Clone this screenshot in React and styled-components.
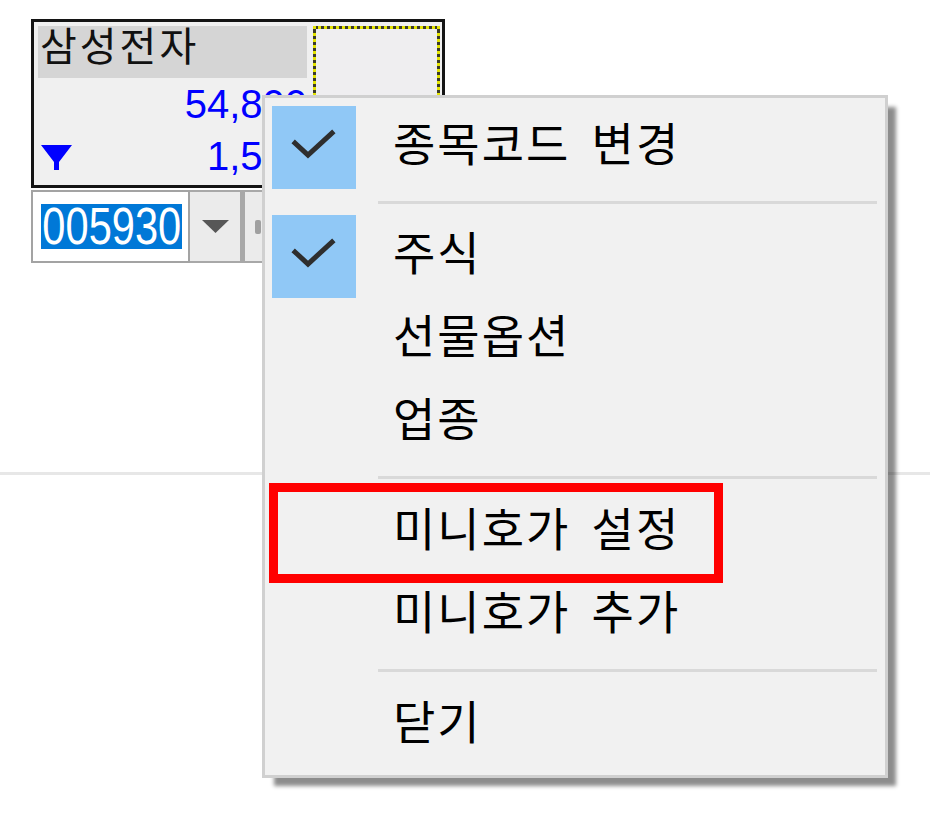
import React from "react";
import styled, { createGlobalStyle } from "styled-components";

const GlobalStyle = createGlobalStyle`
  html, body { margin: 0; padding: 0; background: #ffffff; }
  body {
    width: 930px;
    height: 825px;
    overflow: hidden;
    font-family: "Noto Sans CJK KR", "Noto Sans", sans-serif;
  }
`;

const Page = styled.div`
  position: relative;
  width: 930px;
  height: 825px;
  box-sizing: border-box;
  padding-top: 19px;
`;

const Header = styled.div`
  padding-left: 31px;
`;

const Ticker = styled.div`
  display: flex;
  flex-direction: column;
  gap: 2px;
  width: 414px;
`;

const QuoteBox = styled.div`
  box-sizing: border-box;
  height: 169px;
  border: 3px solid #141414;
  background: #f0f0f0;
  padding: 4px 2px 4px 4px;
  display: grid;
  grid-template-columns: 269px 127px;
  column-gap: 6px;
`;

const QuoteCol = styled.div`
  display: flex;
  flex-direction: column;
`;

const NameRow = styled.div`
  height: 52px;
  background: #d5d5d5;
  padding-left: 2px;
  font-family: "Noto Sans CJK KR", sans-serif;
  font-size: 40px;
  letter-spacing: 3px;
  line-height: 36px;
  color: #111;
`;

const ValueRow = styled.div`
  height: ${(p) => p.$h}px;
  display: flex;
  align-items: flex-start;
  justify-content: space-between;
  font-family: "Liberation Sans", Arial, sans-serif;
  font-size: 40px;
  line-height: 52px;
  color: #0000ff;
`;

const Arrow = styled.svg`
  margin: 15px 0 0 3px;
  flex: none;
`;

const Value = styled.span`
  margin-left: auto;
`;

const FocusBox = styled.div`
  box-sizing: border-box;
  height: 155px;
  border: 3px dotted #e4e400;
  background: linear-gradient(#efeef0, #efeef0) padding-box,
    linear-gradient(#3a3a2a, #3a3a2a) border-box;
`;

const Controls = styled.div`
  display: flex;
  height: 73px;
`;

const CodeInput = styled.div`
  box-sizing: border-box;
  width: 159px;
  height: 73px;
  border: 2px solid #a3a3a3;
  background: #ffffff;
  padding-left: 8px;
  display: flex;
  align-items: center;
`;

const Selection = styled.span`
  display: flex;
  align-items: center;
  justify-content: center;
  width: 141px;
  height: 45px;
  background: #0078d7;
`;

const Digits = styled.span`
  display: inline-block;
  flex: none;
  margin: 0 -16px;
  color: #ffffff;
  font-family: "Liberation Sans", Arial, sans-serif;
  font-size: 52px;
  line-height: 45px;
  transform: scaleX(0.8);
  white-space: nowrap;
`;

const ToolButton = styled.div`
  box-sizing: border-box;
  width: ${(p) => p.$w}px;
  height: 73px;
  border: 2px solid #a8a8a8;
  border-left-width: ${(p) => (p.$first ? 0 : 3)}px;
  background: #ebebeb;
  display: flex;
  align-items: center;
  justify-content: ${(p) => (p.$first ? "center" : "flex-start")};
  padding-left: ${(p) => (p.$first ? 0 : 10)}px;
`;

const Divider = styled.div`
  margin-top: 209px;
  height: 3px;
  background: #e7e7e7;
`;

const Menu = styled.div`
  position: absolute;
  left: 262px;
  top: 95px;
  width: 626px;
  box-sizing: border-box;
  border: 3px solid #d0d0d0;
  background: #f1f1f1;
  padding: 8px 8px 8px 7px;
  box-shadow: 10px 10px 4px -2px rgba(0, 0, 0, 0.45);
  display: flex;
  flex-direction: column;
`;

const Item = styled.div`
  display: flex;
  align-items: flex-start;
  height: 83px;
`;

const CheckCell = styled.div`
  flex: none;
  width: 84px;
  height: 83px;
  background: ${(p) => (p.$checked ? "#90c8f6" : "transparent")};
  display: flex;
  align-items: flex-start;
  justify-content: flex-start;
`;

const Label = styled.span`
  margin-left: 37px;
  font-family: "Noto Sans CJK KR", sans-serif;
  font-size: 46px;
  letter-spacing: 2px;
  line-height: 70px;
  word-spacing: 9px;
  color: #000;
  white-space: nowrap;
`;

const Separator = styled.div`
  height: ${(p) => p.$h}px;
  display: flex;
  align-items: center;
  &::after {
    content: "";
    display: block;
    height: 3px;
    margin-left: 106px;
    flex: 1;
    background: #d9d9d9;
  }
`;

const Highlight = styled.div`
  position: absolute;
  left: 269px;
  top: 483px;
  width: 454px;
  height: 100px;
  box-sizing: border-box;
  border: 9px solid #ff0000;
  pointer-events: none;
`;

const Check = () => (
  <svg width="84" height="83" viewBox="0 0 84 83">
    <polyline
      points="23,37 36,49 60,27"
      fill="none"
      stroke="#2e2e2e"
      strokeWidth="5"
      strokeLinecap="square"
    />
  </svg>
);

const menuEntries = [
  { type: "item", label: "종목코드 변경", checked: true },
  { type: "sep", h: 26 },
  { type: "item", label: "주식", checked: true },
  { type: "item", label: "선물옵션" },
  { type: "item", label: "업종" },
  { type: "sep", h: 27 },
  { type: "item", label: "미니호가 설정" },
  { type: "item", label: "미니호가 추가" },
  { type: "sep", h: 27 },
  { type: "item", label: "닫기" },
];

export default function App() {
  return (
    <>
      <GlobalStyle />
      <Page>
        <Header>
          <Ticker>
            <QuoteBox>
              <QuoteCol>
                <NameRow>삼성전자</NameRow>
                <ValueRow $h={52}>
                  <Value>54,800</Value>
                </ValueRow>
                <ValueRow $h={51}>
                  <Arrow width="31" height="25" viewBox="0 0 31 25">
                    <polygon points="0,0 31,0 18,17 18,25 13,25 13,17" fill="#0000ff" />
                  </Arrow>
                  <Value>1,500</Value>
                </ValueRow>
              </QuoteCol>
              <FocusBox />
            </QuoteBox>
            <Controls>
              <CodeInput>
                <Selection>
                  <Digits>005930</Digits>
                </Selection>
              </CodeInput>
              <ToolButton $w={52} $first>
                <svg width="27" height="13" viewBox="0 0 27 13">
                  <polygon points="0,0 27,0 13.5,13" fill="#575757" />
                </svg>
              </ToolButton>
              <ToolButton $w={53}>
                <svg width="6" height="14" viewBox="0 0 6 14">
                  <rect x="0" y="0" width="6" height="14" rx="2" fill="#a0a0a0" />
                </svg>
              </ToolButton>
            </Controls>
          </Ticker>
        </Header>
        <Divider />

        <Menu>
          {menuEntries.map((e, i) =>
            e.type === "sep" ? (
              <Separator key={i} $h={e.h} />
            ) : (
              <Item key={i}>
                <CheckCell $checked={e.checked}>{e.checked && <Check />}</CheckCell>
                <Label>{e.label}</Label>
              </Item>
            )
          )}
        </Menu>

        <Highlight />
      </Page>
    </>
  );
}
